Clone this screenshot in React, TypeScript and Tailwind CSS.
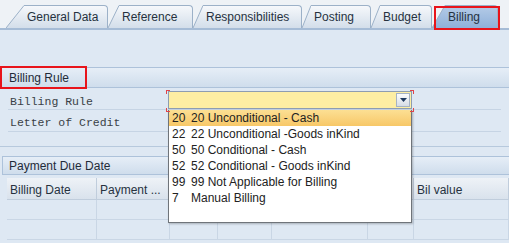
import React from "react";

type TabDef = { label: string; slant: number; body: string; active?: boolean };

const tabs: TabDef[] = [
  { label: "General Data", slant: 18, body: "w-[84px]" },
  { label: "Reference", slant: 11, body: "w-[74px]" },
  { label: "Responsibilities", slant: 10, body: "w-[99px]" },
  { label: "Posting", slant: 9, body: "w-[60px]" },
  { label: "Budget", slant: 9, body: "w-[52px]" },
  { label: "Billing", slant: 13, body: "w-[53px]", active: true },
];

const options = [
  ["20", "20 Unconditional - Cash"],
  ["22", "22 Unconditional -Goods inKind"],
  ["50", "50 Conditional - Cash"],
  ["52", "52 Conditional - Goods inKind"],
  ["99", "99 Not Applicable for Billing"],
  ["7", "Manual Billing"],
];

const cols = ["Billing Date", "Payment ...", "", "", "", "", "Bil value"];

function Tab({ tab }: { tab: TabDef }) {
  const gid = `tab-${tab.label.replace(/\s/g, "")}`;
  const s = tab.slant;
  return (
    <div className="flex h-[23px]">
      <svg width={s} height={23} className="block shrink-0">
        <defs>
          <linearGradient id={gid} x1="0" y1="0" x2="0" y2="1">
            <stop offset="0" stopColor={tab.active ? "#b4cbe7" : "#f6f8fb"} />
            <stop offset="1" stopColor={tab.active ? "#8fb0d9" : "#d3deea"} />
          </linearGradient>
        </defs>
        <polygon points={`0,23 ${s},0 ${s},23`} fill={`url(#${gid})`} />
        <line x1="0" y1="23" x2={s} y2="0.5" stroke="#9cb1c8" />
      </svg>
      <div
        className={`${tab.body} flex items-center pl-[3px] pb-[1px] rounded-tr-[4px] border-t border-r border-[#9cb1c8] text-[#26323f] ${
          tab.active ? "bg-linear-to-b from-[#b4cbe7] to-[#8fb0d9]" : "bg-linear-to-b from-[#f6f8fb] to-[#d3deea]"
        }`}
      >
        {tab.label}
      </div>
    </div>
  );
}

function Corner({ cls }: { cls: string }) {
  return <div className={`absolute w-[4px] h-[4px] border-[#e0454a] ${cls}`} />;
}

export default function App() {
  return (
    <div className="relative w-[509px] h-[243px] overflow-hidden bg-[#dee8f3] text-[12px] text-[#1f2b39] font-['Liberation_Sans',Arial,sans-serif]">
      {/* tab strip */}
      <div className="h-[30px] flex items-end pl-[6px] bg-[#eef2f6] border-b-2 border-[#a6bcd6]">
        {tabs.map((t) => (
          <Tab key={t.label} tab={t} />
        ))}
      </div>

      <div className="h-[37px]" />

      {/* Billing Rule block */}
      <div className="border-b border-[#b7c9dd]">
        <div className="h-[21px] flex items-center pl-[9px] border-t border-b border-[#adc2da] bg-linear-to-b from-[#e6eef7] to-[#cfddec]">
          Billing Rule
        </div>
        <div className="px-[8px]">
          <div className="h-[22px] flex border-b border-[#c6d4e4]">
            <div className="w-[160px] pl-[2px] pt-[5px] font-['Liberation_Mono',monospace] text-[11.5px] text-[#3a3f46]">
              Billing Rule
            </div>
            <div className="mt-[3px] w-[244px] h-[18px] flex border border-[#8d9db1] bg-[#fdeea3]">
              <div className="flex-1" />
              <div className="w-[14px] m-[1px] flex items-center justify-center border border-[#a5b3c4] bg-linear-to-b from-[#fbfcfd] to-[#d6dde6]">
                <svg width="7" height="4" viewBox="0 0 7 4">
                  <polygon points="0,0 7,0 3.5,4" fill="#1f3a60" />
                </svg>
              </div>
            </div>
          </div>
          <div className="h-[22px] flex border-b border-[#c6d4e4]">
            <div className="pl-[2px] pt-[4px] font-['Liberation_Mono',monospace] text-[11.5px] text-[#3a3f46]">
              Letter of Credit
            </div>
          </div>
          <div className="h-[14px]" />
        </div>
      </div>

      <div className="h-[9px]" />

      {/* Payment Due Date block */}
      <div className="ml-[2px]">
        <div className="h-[19px] flex items-center pl-[6px] border-t border-l border-b border-[#adc2da] bg-linear-to-b from-[#e6eef7] to-[#cfddec]">
          Payment Due Date
        </div>
        <div className="h-[3px]" />
        <div className="ml-[5px] grid grid-cols-[90px_73px_48px_54px_96px_46px_1fr]">
          {cols.map((c, i) => (
            <div
              key={i}
              className="h-[22px] flex items-center pl-[3px] pt-[2px] border-r border-b border-[#c0cddc] bg-linear-to-b from-[#eef2f7] to-[#d9e2ec] text-[#26323f] whitespace-nowrap"
            >
              {c}
            </div>
          ))}
          {[0, 1].flatMap((r) =>
            cols.map((_, i) => (
              <div key={`${r}-${i}`} className="h-[20px] border-r border-b border-[#c9d6e5]" />
            ))
          )}
        </div>
      </div>

      {/* dropdown list */}
      <div className="absolute left-[168px] top-[110px] w-[244px] h-[113px] bg-white border border-t-0 border-[#6f747a] shadow-[1px_1px_2px_rgba(0,0,0,0.25)] text-[#222]">
        {options.map(([k, v], i) => (
          <div
            key={k}
            className={`h-[16px] flex items-center ${i === 0 ? "bg-linear-to-b from-[#fcdf93] to-[#f7c767]" : ""}`}
          >
            <span className="w-[22px] pl-[3px]">{k}</span>
            <span>{v}</span>
          </div>
        ))}
      </div>

      {/* focus corners */}
      <Corner cls="left-[166px] top-[90px] border-l border-t" />
      <Corner cls="left-[410px] top-[90px] border-r border-t" />
      <Corner cls="left-[166px] top-[108px] border-l border-b" />
      <Corner cls="left-[410px] top-[108px] border-r border-b" />

      {/* annotation boxes */}
      <div className="absolute left-[434px] top-[6px] w-[66px] h-[24px] border-2 border-[#e8141b]" />
      <div className="absolute left-0 top-[66px] w-[87px] h-[23px] border-2 border-[#e8141b]" />
    </div>
  );
}
